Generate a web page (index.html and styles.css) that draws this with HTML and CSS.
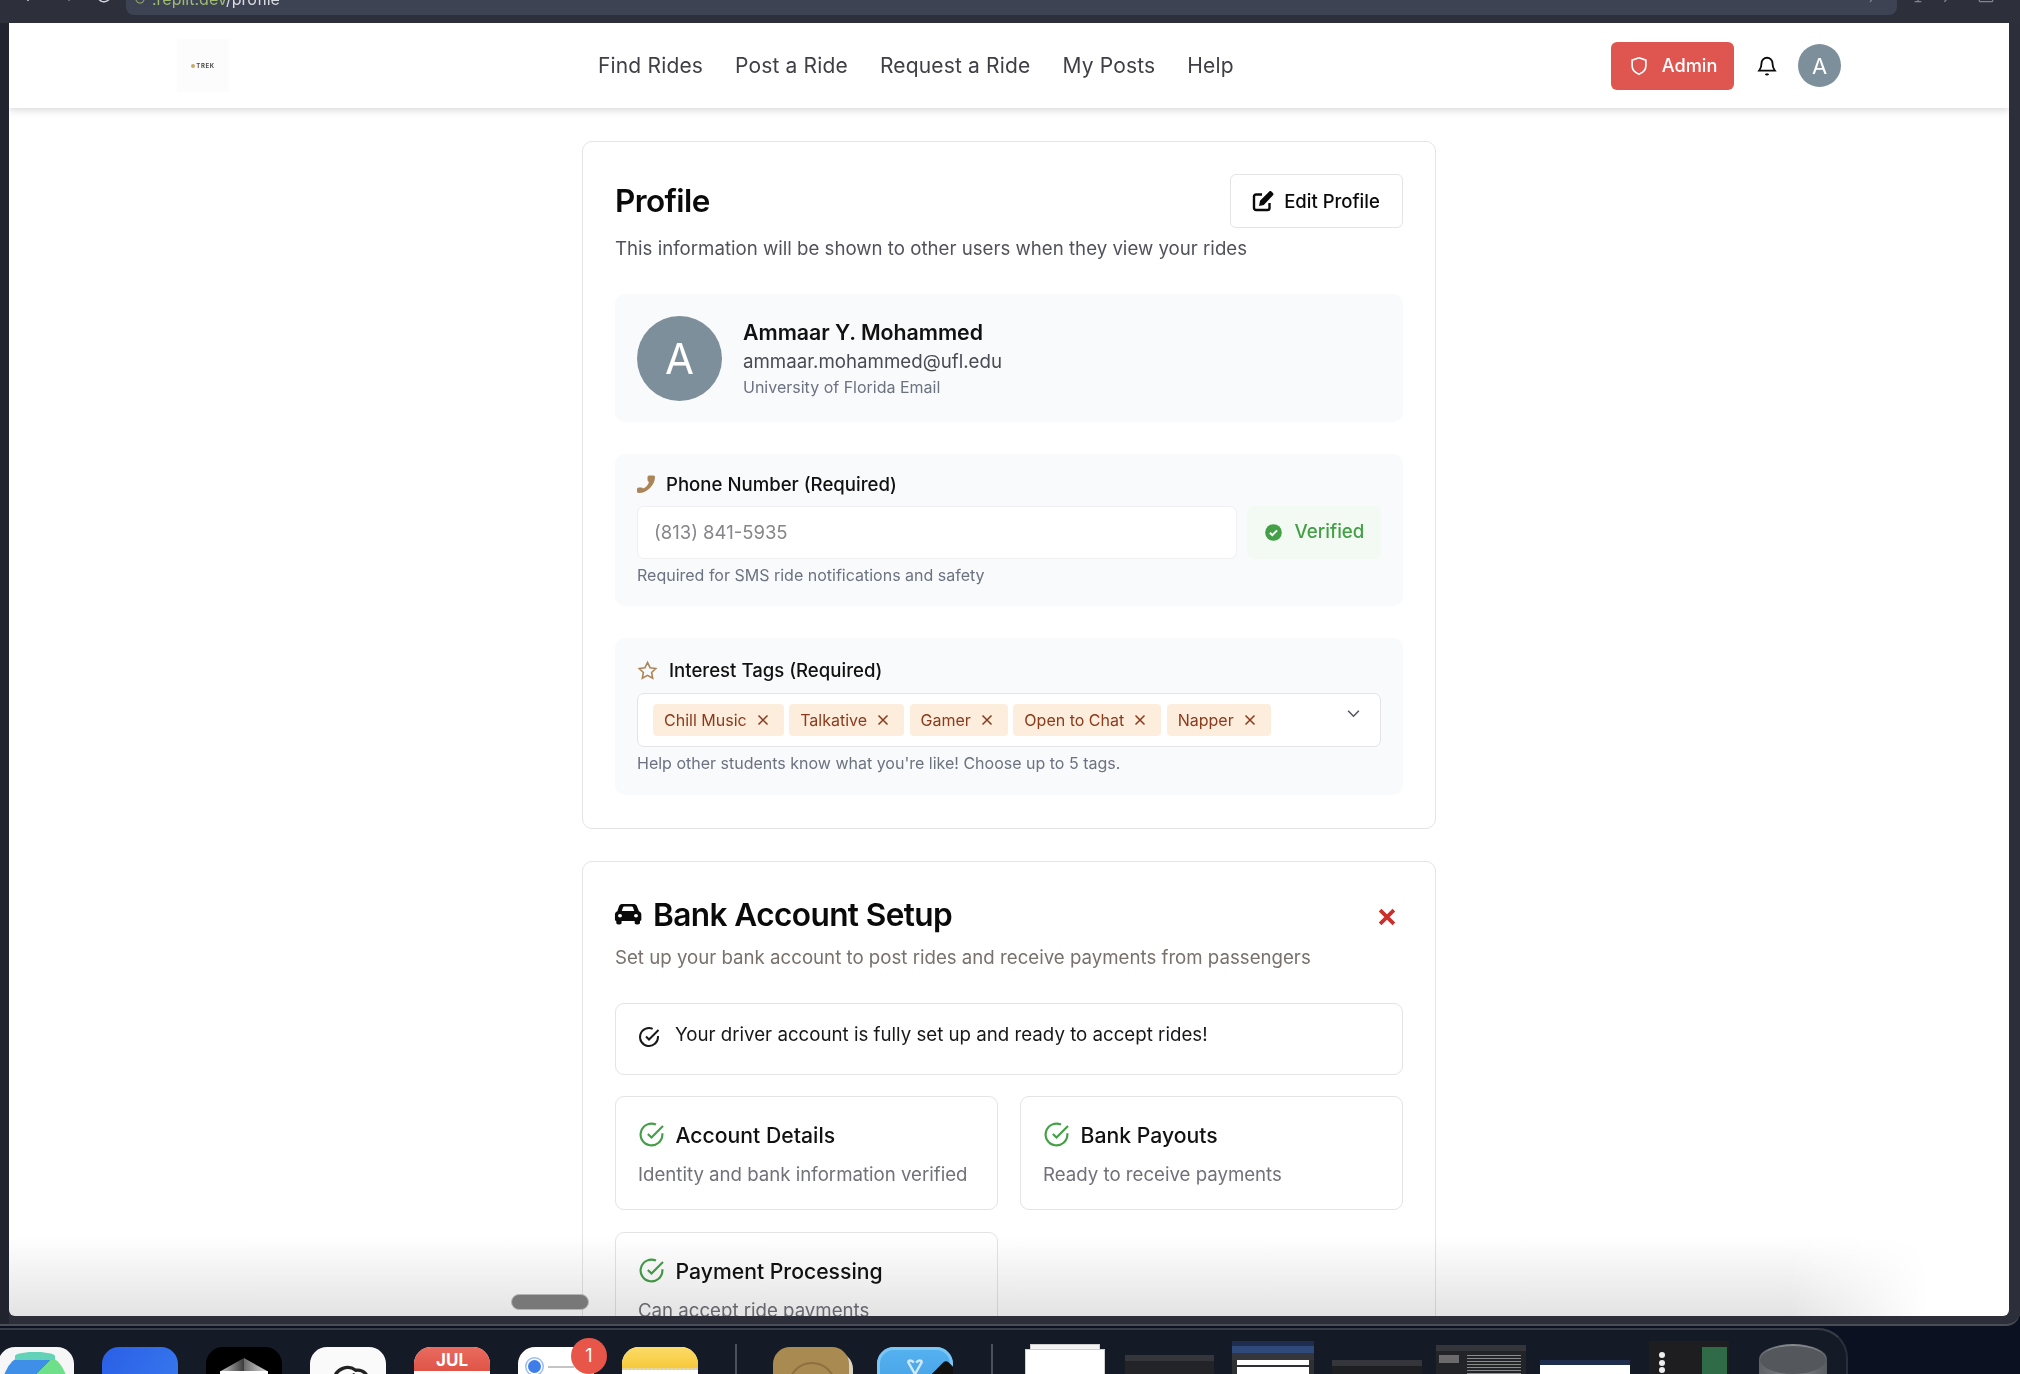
FILE: index.html
```html
<!DOCTYPE html>
<html lang="en">
<head>
<meta charset="utf-8">
<title>Profile</title>
<link rel="stylesheet" href="styles.css">
</head>
<body>
<div class="desktop">
  <div class="window">
    <header class="chrome">
      <div class="chrome-row">
        <svg class="c-ico back" viewBox="0 0 24 24"><path d="M15 5l-7 7 7 7"/></svg>
        <svg class="c-ico dim fwd" viewBox="0 0 24 24"><path d="M9 5l7 7-7 7"/></svg>
        <svg class="c-ico reload" viewBox="0 0 24 24"><path d="M20 12a8 8 0 1 1-3-6.200"/></svg>
        <div class="url">
          <svg class="url-ico" viewBox="0 0 12 12"><path d="M10 6a4 4 0 1 1-1.500-3.100"/></svg>
          <span><span class="url-host">.replit.dev</span>/profile</span>
          <svg class="url-chev" viewBox="0 0 16 16"><path d="M5 15l7-9"/></svg>
        </div>
        <svg class="c-ico dim r1" viewBox="0 0 24 24"><path d="M3 5h18v11H3zM12 16v4M8 20h8"/></svg>
        <svg class="c-ico dim r2" viewBox="0 0 24 24"><path d="M4 20l10-10M13 6l5 5 3-4-4-3z"/></svg>
        <svg class="c-ico dim r3" viewBox="0 0 24 24"><path d="M5 3h14a1 1 0 0 1 1 1v15a1 1 0 0 1-1 1H5a1 1 0 0 1-1-1V4a1 1 0 0 1 1-1zM12 8v5"/></svg>
      </div>
    </header>

    <main class="page">
      <nav class="nav">
        <div class="logo"><span class="logo-pin"></span>TREK</div>
        <div class="nav-links">
          <a>Find Rides</a><a>Post a Ride</a><a>Request a Ride</a><a>My Posts</a><a>Help</a>
        </div>
        <div class="nav-actions">
          <button class="admin">
            <svg class="ic20" viewBox="0 0 24 24"><path d="M12 3l7.500 2.600v6.200c0 4.600-3.200 7.600-7.500 9.200-4.300-1.600-7.500-4.600-7.500-9.200V5.600z"/></svg>
            Admin
          </button>
          <svg class="bell" viewBox="0 0 24 24"><path d="M6 9a6 6 0 0 1 12 0c0 5 1.600 6.600 2.600 8H3.400C4.400 15.600 6 14 6 9z"/><path d="M10.500 20.500a1.700 1.700 0 0 0 3 0"/></svg>
          <div class="nav-avatar">A</div>
        </div>
      </nav>

      <div class="content">
        <section class="card profile-card">
          <div class="head-row">
            <h1 class="h-profile">Profile</h1>
            <button class="edit">
              <svg class="ic22" viewBox="0 0 24 24"><path d="M18.500 14v5a2 2 0 0 1-2 2H5a2 2 0 0 1-2-2V7.500a2 2 0 0 1 2-2h6"/><path class="solid" d="M8 17l1-5.200L18.300 2.500c.6-.6 1.500-.6 2.100 0l1.600 1.600c.6.6.6 1.500 0 2.100L12.800 16z"/></svg>
              Edit Profile
            </button>
          </div>
          <p class="sub dark">This information will be shown to other users when they view your rides</p>

          <div class="panel user-panel">
            <div class="big-avatar">A</div>
            <div class="user-text">
              <div class="user-name">Ammaar Y. Mohammed</div>
              <div class="user-mail">ammaar.mohammed@ufl.edu</div>
              <div class="user-note">University of Florida Email</div>
            </div>
          </div>

          <div class="panel phone-panel">
            <div class="label">
              <svg class="ic-phone" viewBox="0 0 18 18"><path d="M12 .5h4.500q1.500 0 1.500 1.500C18 10 10 18 2 18q-2 0-2-1.500V14q0-1.500 1.500-1.500h3q1 0 1.500 1C9 12.500 11 10 12 7q-1.500-.5-1.500-2V2q0-1.500 1.500-1.500z"/></svg>
              Phone Number (Required)
            </div>
            <div class="phone-row">
              <div class="input">(813) 841-5935</div>
              <div class="verified">
                <svg class="ic-ok" viewBox="0 0 24 24"><circle cx="12" cy="12" r="10.500"/><path d="M7.500 12.300l3 3 6-6"/></svg>
                Verified
              </div>
            </div>
            <div class="hint">Required for SMS ride notifications and safety</div>
          </div>

          <div class="panel tags-panel">
            <div class="label label-tags">
              <svg class="ic-star" viewBox="0 0 24 24"><path d="M12 2.800l2.900 6 6.600.9-4.800 4.600 1.200 6.500-5.900-3.200-5.900 3.200 1.200-6.500L2.500 9.700l6.600-.9z"/></svg>
              Interest Tags (Required)
            </div>
            <div class="select">
              <span class="chip">Chill Music<svg class="x" viewBox="0 0 14 14"><path d="M2.500 2.500l9 9M11.500 2.500l-9 9"/></svg></span>
              <span class="chip">Talkative<svg class="x" viewBox="0 0 14 14"><path d="M2.500 2.500l9 9M11.500 2.500l-9 9"/></svg></span>
              <span class="chip">Gamer<svg class="x" viewBox="0 0 14 14"><path d="M2.500 2.500l9 9M11.500 2.500l-9 9"/></svg></span>
              <span class="chip">Open to Chat<svg class="x" viewBox="0 0 14 14"><path d="M2.500 2.500l9 9M11.500 2.500l-9 9"/></svg></span>
              <span class="chip">Napper<svg class="x" viewBox="0 0 14 14"><path d="M2.500 2.500l9 9M11.500 2.500l-9 9"/></svg></span>
              <svg class="chev" viewBox="0 0 14 14"><path d="M2 4.500l5 5 5-5"/></svg>
            </div>
            <div class="hint">Help other students know what you're like! Choose up to 5 tags.</div>
          </div>
        </section>

        <section class="card bank-card">
          <div class="bank-head">
            <svg class="ic-car" viewBox="0 0 24 24" preserveAspectRatio="none"><path d="M5.200 5.500C5.700 4 6.800 3.500 8 3.500h8c1.200 0 2.300.5 2.800 2l1.400 4.200c1.100.5 1.800 1.500 1.800 2.800v4.500c0 .6-.4 1-1 1v1.500c0 .8-.7 1.500-1.500 1.500h-1c-.8 0-1.500-.7-1.500-1.500V18H7.200v1.500c0 .8-.7 1.500-1.500 1.500h-1c-.8 0-1.500-.7-1.500-1.500V18c-.6 0-1-.4-1-1v-4.500c0-1.300.7-2.300 1.800-2.800zM7.300 9.500h9.400l-1-3.300c-.1-.4-.4-.6-.8-.6H9.100c-.4 0-.7.2-.8.600zM6 15a1.500 1.500 0 1 0 0-3 1.500 1.500 0 0 0 0 3zm12 0a1.500 1.500 0 1 0 0-3 1.500 1.500 0 0 0 0 3z"/></svg>
            <h2 class="h-bank">Bank Account Setup</h2>
            <svg class="ic-close" viewBox="0 0 16 16"><path d="M2.500 2.500l11 11M13.500 2.500l-11 11"/></svg>
          </div>
          <p class="sub warm">Set up your bank account to post rides and receive payments from passengers</p>

          <div class="alert">
            <svg class="ic-check dark-check" viewBox="0 0 24 24"><path d="M21 11v1a9 9 0 1 1-5.300-8.200"/><path d="M9 11.500l3 3L21.500 5"/></svg>
            <span>Your driver account is fully set up and ready to accept rides!</span>
          </div>

          <div class="status-grid">
            <div class="status">
              <div class="status-title"><svg class="ic-check green" viewBox="0 0 24 24"><path d="M21 11v1a9 9 0 1 1-5.300-8.200"/><path d="M9 11.500l3 3L21.500 5"/></svg>Account Details</div>
              <div class="status-text">Identity and bank information verified</div>
            </div>
            <div class="status">
              <div class="status-title"><svg class="ic-check green" viewBox="0 0 24 24"><path d="M21 11v1a9 9 0 1 1-5.300-8.200"/><path d="M9 11.500l3 3L21.500 5"/></svg>Bank Payouts</div>
              <div class="status-text">Ready to receive payments</div>
            </div>
            <div class="status">
              <div class="status-title"><svg class="ic-check green" viewBox="0 0 24 24"><path d="M21 11v1a9 9 0 1 1-5.300-8.200"/><path d="M9 11.500l3 3L21.500 5"/></svg>Payment Processing</div>
              <div class="status-text">Can accept ride payments</div>
            </div>
          </div>
        </section>
      </div>

      <div class="fade"></div>
      <div class="pill"></div>
    </main>
  </div>

  <footer class="dock">
    <div class="app app-maps"><span class="maps-disc"></span></div>
    <div class="app app-blue"></div>
    <div class="app app-black"><span class="pyramid"></span></div>
    <div class="app app-white">
      <svg class="app-glyph" viewBox="0 0 60 40"><path d="M10 40c-6-8-2-16 6-19 2-10 14-14 22-8 8-1 14 5 12 13 4 4 4 10 2 14M20 40l2-14 14-8 12 7v15M30 40v-10l8-4 6 4v10"/></svg>
    </div>
    <div class="app app-cal"><div class="cal-top">JUL</div></div>
    <div class="app app-rem"><span class="rem-dot"></span><span class="rem-line"></span><span class="badge">1</span></div>
    <div class="app app-notes"><div class="notes-top"></div></div>
    <div class="sep"></div>
    <div class="app app-brown"><span class="ring"></span></div>
    <div class="app app-sky">
      <svg class="sky-glyph" viewBox="0 0 20 20"><path d="M4 2l9 16M16 2l-9 16M4 2q3-2 5 1M16 2q-3-2-5 1"/></svg>
      <span class="sky-wedge"></span>
    </div>
    <div class="sep sep2"></div>
    <div class="thumb th-doc"><div class="th-tab"></div><div class="th-sheet"></div></div>
    <div class="thumb th-a"><div class="th-bar"></div><div class="th-pop"></div></div>
    <div class="thumb th-b"><div class="th-bar navy"></div><div class="th-bar blue"></div><div class="th-bar"></div><div class="th-white"></div><div class="th-white tall"></div></div>
    <div class="thumb th-c"><div class="th-bar"></div></div>
    <div class="thumb th-d"><div class="th-bar"></div><div class="th-body"><div class="th-side"></div><div class="th-lines"></div></div></div>
    <div class="thumb th-e"><div class="th-bar navy"></div></div>
    <div class="thumb th-f"><div class="th-people"><span></span><span></span><span></span></div><div class="th-green"></div></div>
    <div class="trash"></div>
  </footer>
</div>
</body>
</html>
```
FILE: styles.css
```css
* { box-sizing: border-box; }
html, body { margin: 0; padding: 0; }
body { font-family: Inter, "Liberation Sans", sans-serif; background: #0b1120; color: #0a0a0a; }
.desktop { width: 2020px; height: 1374px; display: flex; flex-direction: column; overflow: hidden; background: #0b1120; }

/* browser window */
.window { flex: none; height: 1326px; padding-bottom: 8px; background: linear-gradient(90deg, #21242e 0 9px, #2c2f39 9px); border-bottom: 2px solid #4a4d56; border-radius: 0 0 14px 0; overflow: hidden; }
.chrome { height: 23px; background: #2d303b; overflow: hidden; display: flex; align-items: flex-end; }
.chrome-row { display: flex; align-items: center; height: 40px; width: 100%; margin-bottom: 8px; padding-left: 16px; }
.c-ico { width: 20px; height: 20px; fill: none; stroke: #d5d8df; stroke-width: 1.600; flex: none; }
.c-ico.dim { stroke: #7b8496; }
.back { margin-right: 25px; }
.fwd { margin-right: 13px; }
.reload { margin-right: 12px; }
.r1 { margin-left: 11px; }
.r2 { margin-left: 13px; }
.r3 { margin-left: 15px; }
.url { width: 1771px; height: 40px; flex: none; background: #3e4354; border-radius: 8px; color: #d9dbe2; font-size: 16px; line-height: 18px; padding: 15px 16px 0 8px; display: flex; align-items: flex-start; gap: 6px; }
.url-ico { width: 12px; height: 12px; fill: none; stroke: #7f9a63; stroke-width: 1.300; margin-top: 3px; flex: none; }
.url-host { color: #9dbb72; }
.url-chev { width: 16px; height: 16px; margin: -3px 0 0 auto; fill: none; stroke: #7b8496; stroke-width: 1.300; }

/* page */
.page { position: relative; height: 1293px; margin: 0 11px 0 9px; background: #fff; overflow: hidden; border-radius: 0 0 6px 6px; }
.nav { height: 85px; display: flex; align-items: center; padding: 0 168px; background: #fff; box-shadow: 0 2px 8px rgba(0,0,0,.16); position: relative; }
.logo { width: 52px; height: 53px; background: #fcfcfc; font-size: 6px; font-weight: 700; letter-spacing: .6px; color: #4a4a4a; display: flex; align-items: center; justify-content: center; gap: 1px; flex: none; }
.logo-pin { width: 4px; height: 4px; border-radius: 50%; background: #c8a96a; }
.nav-links { display: flex; gap: 32px; margin-left: 369px; font-size: 21px; color: #3f3f46; letter-spacing: .16px; flex: none; }
.nav-actions { margin-left: auto; display: flex; align-items: center; }
.admin { height: 48px; width: 123px; border: 0; border-radius: 6px; background: #df5550; color: #fff; font: 500 18.200px Inter, sans-serif; display: flex; align-items: center; justify-content: center; gap: 12px; padding: 0 0 2px; }
.admin .ic20 { margin-top: 2px; }
.ic20 { width: 22px; height: 22px; fill: none; stroke: #fff; stroke-width: 1.800; }
.bell { width: 22px; height: 22px; fill: none; stroke: #0a0a0a; stroke-width: 2; margin: 0 20px 0 22px; }
.nav-avatar { width: 43px; height: 43px; border-radius: 50%; background: #7d8f9b; color: #fff; font-size: 22px; display: flex; align-items: center; justify-content: center; }

.content { width: 854px; margin: 33px auto 0 573px; }
.card { border: 1.500px solid #e4e4e7; border-radius: 10px; background: #fff; padding: 32px; }
.profile-card { height: 688px; margin-bottom: 32px; }
.head-row { display: flex; justify-content: space-between; align-items: center; height: 54px; }
.h-profile { margin: 0 0 2px; font-size: 31.500px; font-weight: 600; letter-spacing: -.6px; }
.edit { width: 173px; height: 54px; border: 1.500px solid #e4e4e7; border-radius: 6px; background: #fff; font: 500 18.500px Inter, sans-serif; color: #0a0a0a; display: flex; align-items: center; justify-content: center; gap: 9px; padding: 0 2px 1px 0; }
.ic22 { width: 24px; height: 24px; fill: none; stroke: #0a0a0a; stroke-width: 2.400; }
.solid { fill: #0a0a0a; stroke: none; }
.sub { margin: 8px 0 0; font-size: 18.670px; line-height: 26px; }
.dark { color: #52525b; }
.warm { color: #78716c; }
.panel { background: #f9fafb; border-radius: 10px; }
.user-panel { height: 128px; margin-top: 32px; padding: 22px; display: flex; gap: 21px; align-items: center; }
.big-avatar { width: 85px; height: 85px; border-radius: 50%; background: #7d8f9b; color: #fff; font-size: 42px; display: flex; align-items: center; justify-content: center; flex: none; }
.user-name { font-size: 21.300px; font-weight: 600; line-height: 28px; color: #111; }
.user-mail { font-size: 18.700px; line-height: 28px; color: #4a4a52; margin-top: 2px; }
.user-note { font-size: 16px; line-height: 22px; color: #6b7280; }

.phone-panel { height: 152px; margin-top: 32px; padding: 17px 22px 0; }
.label { display: flex; align-items: center; gap: 11px; font-size: 18.600px; font-weight: 500; line-height: 26px; color: #111; }
.ic-phone { width: 18px; height: 18px; fill: #ab8558; flex: none; }
.phone-row { display: flex; gap: 10px; margin-top: 9px; }
.input { width: 600px; height: 53px; border: 1.500px solid #f0f0f2; border-radius: 7px; background: #fff; padding-left: 16px; font-size: 18.500px; line-height: 50px; color: #85858a; }
.verified { width: 134px; height: 53px; background: #f3faf3; border-radius: 7px; color: #43a047; font-size: 18.700px; font-weight: 500; display: flex; align-items: center; justify-content: center; gap: 12px; padding-bottom: 2px; }
.ic-ok { width: 19px; height: 19px; margin-top: 2px; }
.ic-ok circle { fill: #43a047; }
.ic-ok path { fill: none; stroke: #fff; stroke-width: 2.500; }
.hint { font-size: 16px; line-height: 22px; color: #6b7280; margin-top: 5px; }

.tags-panel { height: 157px; margin-top: 32px; padding: 19px 22px 0; }
.label-tags { gap: 11px; }
.ic-star { width: 21px; height: 21px; fill: none; stroke: #ab8558; stroke-width: 1.800; }
.select { height: 54px; margin-top: 10px; border: 1.500px solid #e4e4e7; border-radius: 7px; background: #fff; padding: 0 0 0 15px; display: flex; align-items: center; gap: 5.500px; position: relative; }
.chip { height: 32px; background: #fdeddc; border-radius: 4px; color: #8b3a1c; font-size: 16px; display: flex; align-items: center; padding: 0 14px 0 11px; gap: 9px; white-space: nowrap; }
.x { width: 14px; height: 14px; fill: none; stroke: #8b3a1c; stroke-width: 1.500; }
.chev { position: absolute; right: 19px; top: 12px; width: 15px; height: 15px; fill: none; stroke: #52525b; stroke-width: 1.400; }
.tags-panel .hint { margin-top: 5px; }

.bank-head { display: flex; align-items: center; height: 50px; margin-top: -5px; }
.ic-car { width: 32px; height: 28px; fill: #0a0a0a; flex: none; margin: 0 9px 0 -3px; }
.h-bank { margin: 0; font-size: 31.600px; font-weight: 600; letter-spacing: -.6px; flex: 1; }
.ic-close { width: 20px; height: 20px; fill: none; stroke: #cc2f2a; stroke-width: 3; margin: 5px 6px 0 0; }
.bank-card .sub { margin-top: 6px; }
.alert { height: 72px; margin-top: 32px; border: 1.500px solid #e4e4e7; border-radius: 9px; padding: 18px 21px; display: flex; gap: 14px; font-size: 18.700px; line-height: 26px; color: #18181b; }
.ic-check { width: 24px; height: 24px; fill: none; stroke-width: 2; flex: none; }
.dark-check { stroke: #18181b; margin-top: 3px; }
.green { stroke: #43a047; stroke-width: 1.800; }
.status-grid { display: grid; grid-template-columns: 383px 383px; gap: 22px; margin-top: 21px; }
.status { height: 114px; border: 1.500px solid #e4e4e7; border-radius: 9px; padding: 23px 22px 0; }
.status-title { display: flex; align-items: center; gap: 9.500px; font-size: 21.200px; font-weight: 500; line-height: 26px; color: #111; margin-left: -1px; }
.status-title .ic-check { width: 29px; height: 29px; }
.status-text { font-size: 18.650px; line-height: 26px; color: #71717a; margin-top: 12px; }

.fade { position: absolute; left: 0; right: 0; bottom: 0; height: 80px; background: linear-gradient(to bottom, #fff, #e3e3e3); mix-blend-mode: multiply; -webkit-mask-image: linear-gradient(to right, #000 89%, transparent 96%); mask-image: linear-gradient(to right, #000 89%, transparent 96%); }
.pill { position: absolute; left: 502px; top: 1271px; width: 78px; height: 16px; border-radius: 8px; background: #787878; border: 1.500px solid #b5b5b5; }

/* dock */
.dock { flex: none; width: 1848px; height: 46px; margin-top: 2px; background: #141a26; border-top: 2px solid #383c46; border-right: 2px solid #2a2f3a; border-radius: 0 30px 0 0; display: flex; align-items: flex-start; padding-top: 17px; overflow: hidden; }
.app { width: 76px; height: 76px; flex: none; border-radius: 17px; margin-right: 28px; position: relative; overflow: hidden; }
.app-maps { background: #f6f6f6; margin-left: -2px; margin-right: 28px; }
.maps-disc { position: absolute; left: 5px; top: 5px; width: 64px; height: 64px; border-radius: 50%; background: conic-gradient(from -45deg at 50% 36%, #3f8fe8 0 90deg, #6fe08a 90deg 270deg, #3f8fe8 270deg); }
.maps-disc::before { content: ""; position: absolute; left: 12px; top: 0; width: 40px; height: 8px; border-radius: 50% 50% 0 0; background: #62d3b6; }
.app-blue { background: linear-gradient(120deg, #2a5fe6, #3a7cef); }
.app-black { background: #000; }
.pyramid { position: absolute; left: 14px; top: 11px; width: 48px; height: 30px; background: linear-gradient(90deg, #c9c9c9, #3a3a3a 50%, #6a6a6a 50%, #e0e0e0); clip-path: polygon(50% 0, 100% 45%, 100% 100%, 0 100%, 0 45%); }
.pyramid::after { content: ""; position: absolute; left: 0; right: 0; top: 13px; height: 17px; background: #fff; }
.app-white { background: #fafafa; }
.app-glyph { width: 58px; height: 40px; margin: 10px 9px; fill: none; stroke: #222; stroke-width: 3.500; display: block; }
.app-cal { background: #fff; }
.cal-top { height: 24px; background: linear-gradient(#ea6a5e, #df5548); color: #fff; font-size: 17px; font-weight: 700; text-align: center; line-height: 26px; }
.app-rem { background: #fff; overflow: visible; }
.rem-dot { position: absolute; left: 10px; top: 13px; width: 13px; height: 13px; border-radius: 50%; background: #3f7de8; box-shadow: 0 0 0 1.500px #fff, 0 0 0 3px #9dbcf2; }
.rem-line { position: absolute; left: 30px; top: 19px; width: 26px; height: 1.500px; background: #c4c4c4; }
.badge { position: absolute; left: 53px; top: -9px; width: 36px; height: 36px; border-radius: 50%; background: #e8564a; color: #fff; font-size: 18px; text-align: center; line-height: 36px; }
.app-notes { background: #fff; }
.notes-top { height: 23px; background: linear-gradient(#fbdc68, #f7c93a); border-bottom: 2px dotted #d0d0d0; }
.sep { width: 2px; height: 34px; background: #4d515b; margin: -3px 36px 0 9px; flex: none; }
.app-brown { background: #a98a50; overflow: visible; box-shadow: 4px 5px 0 #d8d4c8; }
.ring { position: absolute; left: 15px; top: 15px; width: 48px; height: 48px; border-radius: 50%; border: 2px solid #8d7040; }
.app-sky { background: linear-gradient(#55b2f0, #3b93dd); box-shadow: inset 0 0 0 3px #7cc6f4; }
.sky-glyph { position: absolute; left: 26px; top: 11px; width: 24px; height: 26px; fill: none; stroke: #cfe9fb; stroke-width: 2; }
.sky-wedge { position: absolute; left: 54px; top: 19px; width: 30px; height: 30px; background: #111; transform: rotate(45deg); border-radius: 4px; }
.sep2 { margin: -3px 32px 0 10px; }

.thumb { flex: none; background: #232428; height: 60px; overflow: hidden; }
.th-doc { width: 80px; background: transparent; margin: -3px 20px 0 0; overflow: visible; }
.th-tab { height: 5px; margin: 0 5px; background: #f4f4f4; border: 1px solid #cfcfcf; border-bottom: 0; }
.th-sheet { height: 55px; background: #fff; border: 1px solid #d0d0d0; }
.th-a { width: 89px; margin: 8px 18px 0 0; }
.th-pop { width: 30px; height: 30px; margin: 13px 0 0 48px; border: 1px solid #3f6fae; }
.th-b { width: 82px; margin: -6px 18px 0 0; background: #2f3033; }
.th-c { width: 90px; margin: 13px 14px 0 0; background: #1e1f23; }
.th-d { width: 90px; margin: -2px 14px 0 0; }
.th-e { width: 90px; margin: 13px 19px 0 0; background: #fff; }
.th-f { width: 80px; margin: -6px 30px 0 0; background: #1e1e20; position: relative; }
.th-bar { height: 6px; background: #34363c; }
.th-b .th-bar { height: 7px; }
.th-bar.blue { background: #2f4a7a; }
.th-bar.navy { background: #1e2c4d; height: 5px; }
.th-white { height: 5px; margin: 0 5px 2px; background: #fff; }
.th-white.tall { height: 20px; }
.th-body { display: flex; gap: 8px; margin-top: 4px; }
.th-side { width: 20px; height: 8px; margin-left: 3px; background: #6b6b6b; }
.th-lines { width: 54px; height: 28px; background: repeating-linear-gradient(#8b8b8b 0 1px, #232428 1px 3px); }
.th-people { position: absolute; left: 10px; top: 11px; display: flex; flex-direction: column; gap: 1.500px; }
.th-people span { display: block; width: 6px; height: 6px; border-radius: 50%; background: #eee; }
.th-green { position: absolute; right: 2px; top: 6px; width: 25px; height: 54px; background: #2f6b47; }
.trash { width: 68px; height: 60px; flex: none; margin-top: -3px; background: linear-gradient(90deg, #5e6266, #82868a 50%, #585c60); border-radius: 34px 34px 0 0 / 15px 15px 0 0; position: relative; }
.trash::before { content: ""; position: absolute; left: 1px; right: 1px; top: 1px; height: 28px; border-radius: 50%; background: #54585d; border-top: 1.500px solid #8a8d92; }
```
